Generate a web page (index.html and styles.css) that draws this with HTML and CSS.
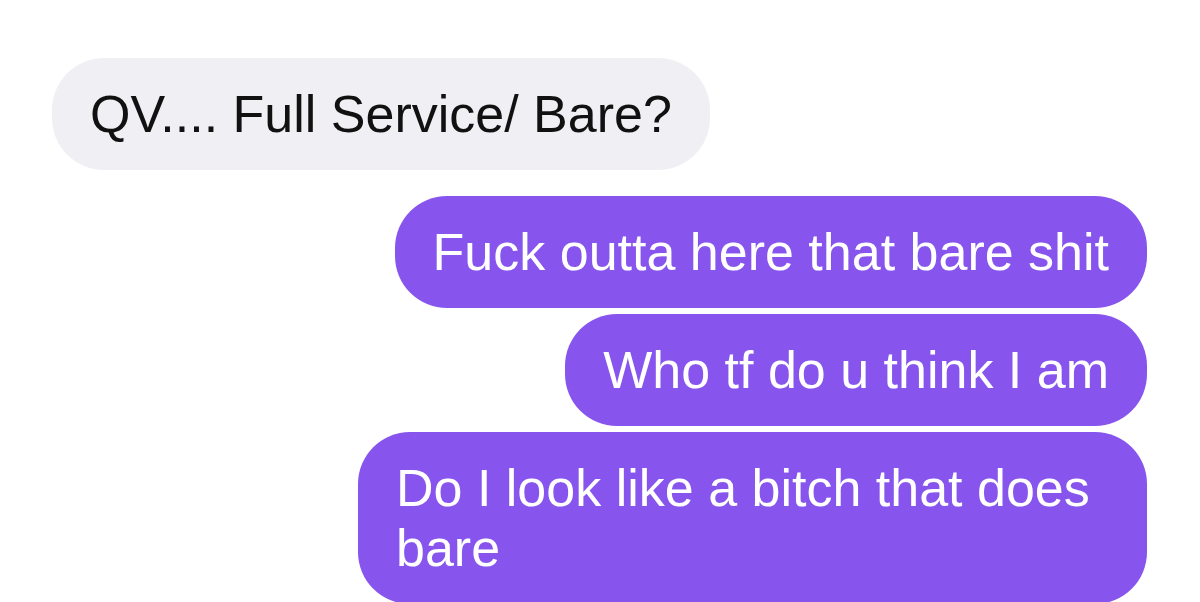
FILE: index.html
```html
<!DOCTYPE html>
<html lang="en">
<head>
  <meta charset="UTF-8">
  <meta name="viewport" content="width=device-width, initial-scale=1.0">
  <title>Messages</title>
  <link rel="stylesheet" href="styles.css">
</head>
<body>
  <div class="thread">
    <!-- incoming -->
    <div class="bubble received">QV.... Full Service/ Bare?</div>

    <!-- outgoing -->
    <div class="bubble sent first">Fuck outta here that bare shit</div>
    <div class="bubble sent">Who tf do u think I am</div>
    <div class="bubble sent">Do I look like a bitch that does bare</div>
  </div>
</body>
</html>
```

FILE: styles.css
```css
body {
  margin: 0;
  background: #ffffff;
  font-family: "Liberation Sans", Arial, sans-serif;
}

.thread {
  display: flex;
  flex-direction: column;
  gap: 6px;
  padding: 58px 53px 0 52px;
}

.bubble {
  box-sizing: border-box;
  max-width: 789px;
  padding: 26px 38px;
  border-radius: 52px;
  font-size: 52px;
  line-height: 60px;
}

.received {
  align-self: flex-start;
  background-color: #f0f0f4;
  color: #111111;
}

.sent {
  align-self: flex-end;
  background-color: #8755ee;
  color: #ffffff;
}

.sent.first {
  margin-top: 20px;
}
```
